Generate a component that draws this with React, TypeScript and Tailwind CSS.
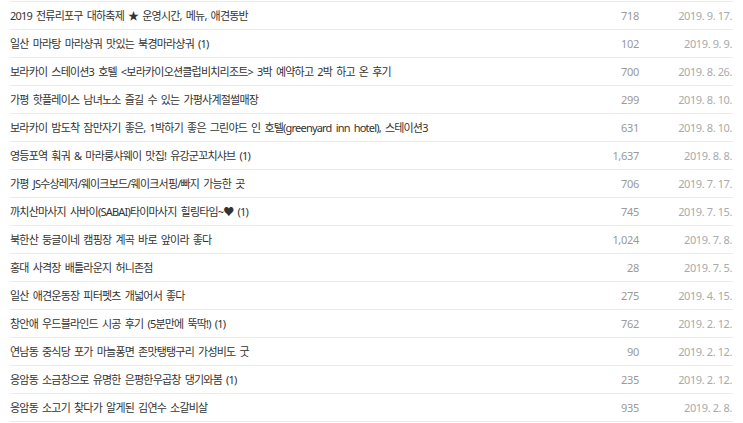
const posts = [
  { title: '2019 전류리포구 대하축제 ★ 운영시간, 메뉴, 애견동반', views: '718', date: '2019. 9. 17.' },
  { title: '일산 마라탕 마라샹궈 맛있는 북경마라샹궈 (1)', views: '102', date: '2019. 9. 9.' },
  { title: '보라카이 스테이션3 호텔 <보라카이오션클럽비치리조트> 3박 예약하고 2박 하고 온 후기', views: '700', date: '2019. 8. 26.' },
  { title: '가평 핫플레이스 남녀노소 즐길 수 있는 가평사계절썰매장', views: '299', date: '2019. 8. 10.' },
  { title: '보라카이 밤도착 잠만자기 좋은, 1박하기 좋은 그린야드 인 호텔(greenyard inn hotel), 스테이션3', views: '631', date: '2019. 8. 10.' },
  { title: '영등포역 훠궈 & 마라룽샤웨이 맛집! 유강군꼬치샤브 (1)', views: '1,637', date: '2019. 8. 8.' },
  { title: '가평 JS수상레저/웨이크보드/웨이크서핑/빠지 가능한 곳', views: '706', date: '2019. 7. 17.' },
  { title: '까치산마사지 사바이(SABAI)타이마사지 힐링타임~♥ (1)', views: '745', date: '2019. 7. 15.' },
  { title: '북한산 둥글이네 캠핑장 계곡 바로 앞이라 좋다', views: '1,024', date: '2019. 7. 8.' },
  { title: '홍대 사격장 배틀라운지 허니존점', views: '28', date: '2019. 7. 5.' },
  { title: '일산 애견운동장 피터펫츠 개넓어서 좋다', views: '275', date: '2019. 4. 15.' },
  { title: '창안애 우드블라인드 시공 후기 (5분만에 뚝딱!) (1)', views: '762', date: '2019. 2. 12.' },
  { title: '연남동 중식당 포가 마늘퐁면 존맛탱탱구리 가성비도 굿', views: '90', date: '2019. 2. 12.' },
  { title: '응암동 소금창으로 유명한 은평한우곱창 댕기와봄 (1)', views: '235', date: '2019. 2. 12.' },
  { title: '응암동 소고기 찾다가 알게된 김연수 소갈비살', views: '935', date: '2019. 2. 8.' },
]

export default function App() {
  return (
    <div className="w-[743px] h-[423px] bg-white overflow-hidden pl-[10px] pt-[1px] font-['Noto_Sans','Noto_Sans_CJK_KR',sans-serif]">
      <ul className="w-[723px] border-t border-[#ececec]">
        {posts.map((p) => (
          <li
            key={p.title}
            className="h-[28px] flex items-center border-b border-[#ececec] text-[11px] leading-[16px]"
          >
            <span className="flex-1 whitespace-nowrap text-[#333] tracking-[-0.8px] [word-spacing:2px]">
              {p.title}
            </span>
            <span className="w-[60px] text-right text-[#999] shrink-0 pr-[2px] tracking-[-0.3px]">{p.views}</span>
            <span className="w-[92px] text-right text-[#aaa] shrink-0 pr-[1px] tracking-[-0.4px]">{p.date}</span>
          </li>
        ))}
      </ul>
    </div>
  )
}
